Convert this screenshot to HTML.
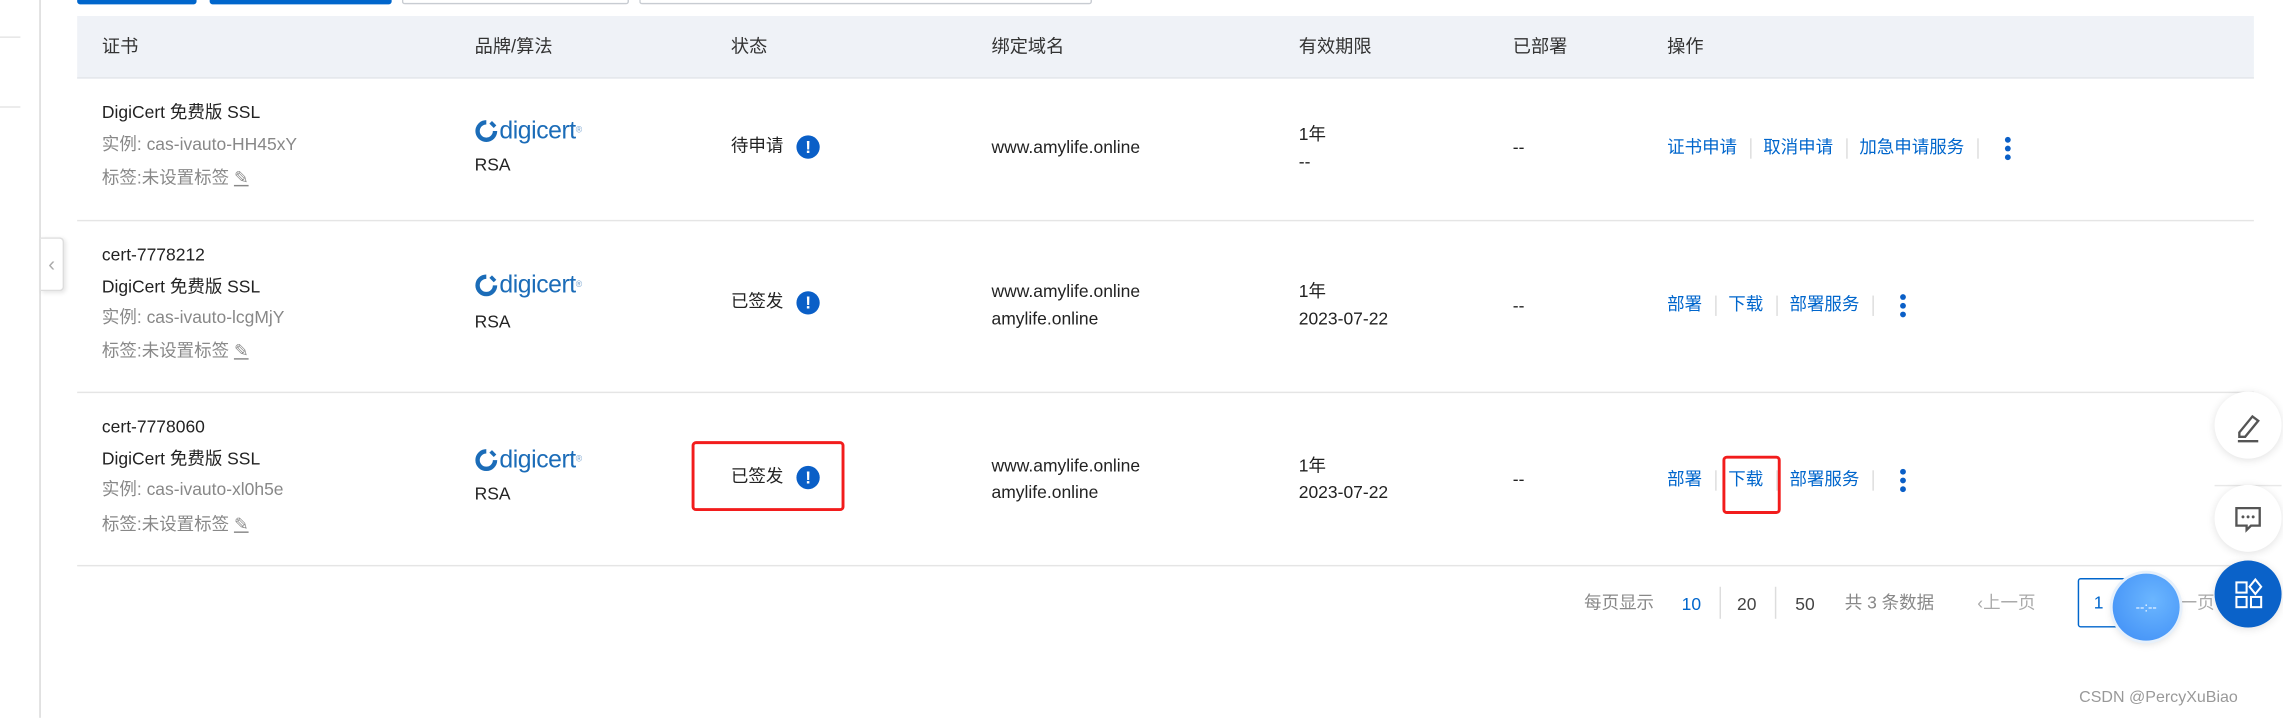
<!DOCTYPE html>
<html><head><meta charset="utf-8">
<style>
html,body{margin:0;padding:0;background:#fff;}
body{width:2283px;height:718px;overflow:hidden;position:relative;}
#s{position:absolute;left:0;top:0;width:1568px;height:493px;transform:scale(1.456);transform-origin:0 0;font-family:"Liberation Sans","Noto Sans CJK SC",sans-serif;font-size:12px;color:#222;}
.a{position:absolute;white-space:nowrap;line-height:14px;}
.g{color:#888;}
.b{color:#0066cc;}
.hd{font-size:12.5px;color:#333;}
.line{position:absolute;left:53px;width:1495px;height:1px;background:#e5e5e5;}
.ic{display:inline-block;width:16px;height:16px;border-radius:50%;background:#0a5fc7;color:#fff;font-weight:bold;font-size:12px;line-height:16px;text-align:center;vertical-align:middle;margin-left:9px;}
.sep{display:inline-block;width:1px;height:14px;background:#ddd;vertical-align:middle;margin:0 8.5px;}
.dots{display:inline-block;vertical-align:middle;margin-left:10px;width:4px;}
.dots i{display:block;width:4px;height:4px;border-radius:50%;background:#0a5fc7;margin:2px 0;}
.logo{position:absolute;color:#1b6cb8;font-size:17px;letter-spacing:-0.3px;white-space:nowrap;line-height:18px;}
.logo svg{vertical-align:-3px;margin-right:1px;}
.logo sup{font-size:6px;color:#7aa5d0;vertical-align:top;}
.fb{position:absolute;left:1521px;width:46px;height:46px;border-radius:50%;background:#fff;box-shadow:0 1px 6px rgba(0,0,0,.12);}
</style></head><body><div id="s">
<div style="position:absolute;left:27px;top:0;width:1px;height:493px;background:#d8d8d8"></div>
<div style="position:absolute;left:0;top:25px;width:14px;height:1px;background:#e5e5e5"></div>
<div style="position:absolute;left:0;top:73px;width:14px;height:1px;background:#e5e5e5"></div>
<div style="position:absolute;left:28px;top:163px;width:15px;height:35px;border:1px solid #ddd;border-left:none;border-radius:0 3px 3px 0;background:#fff;box-shadow:1px 1px 3px rgba(0,0,0,.1);color:#aaa;font-size:14px;line-height:35px;text-align:center">&lsaquo;</div>
<div style="position:absolute;left:53px;top:0;width:82px;height:3px;background:#0066cc;border-radius:0 0 2px 2px"></div>
<div style="position:absolute;left:144px;top:0;width:125px;height:3px;background:#0066cc;border-radius:0 0 2px 2px"></div>
<div style="position:absolute;left:276px;top:-2px;width:154px;height:4px;border:1px solid #c8ccd2;border-top:none;border-radius:0 0 2px 2px"></div>
<div style="position:absolute;left:439px;top:-2px;width:309px;height:4px;border:1px solid #c8ccd2;border-top:none;border-radius:0 0 2px 2px"></div>
<div style="position:absolute;left:53px;top:11px;width:1495px;height:42px;background:#eff2f7;border-bottom:1px solid #e3e6eb"></div>
<div class="a hd" style="left:70px;top:25px">证书</div>
<div class="a hd" style="left:326px;top:25px">品牌/算法</div>
<div class="a hd" style="left:502px;top:25px">状态</div>
<div class="a hd" style="left:681px;top:25px">绑定域名</div>
<div class="a hd" style="left:892px;top:25px">有效期限</div>
<div class="a hd" style="left:1039px;top:25px">已部署</div>
<div class="a hd" style="left:1145px;top:25px">操作</div>
<div class="line" style="top:151px"></div>
<div class="line" style="top:269px"></div>
<div class="line" style="top:388px"></div>

<div class="a" style="left:70px;top:70px">DigiCert 免费版 SSL</div>
<div class="a g" style="left:70px;top:92px">实例: cas-ivauto-HH45xY</div>
<div class="a g" style="left:70px;top:115px">标签:未设置标签 <u>&#x270E;</u></div>
<div class="logo" style="left:326px;top:81px"><svg width="16" height="16" viewBox="0 0 16 16"><path d="M8 2 A6 6 0 1 0 14 8" fill="none" stroke="#1b6cb8" stroke-width="3"/><path d="M11 2 L14 5" stroke="#1b6cb8" stroke-width="2.5"/></svg>digicert<sup>®</sup></div>
<div class="a" style="left:326px;top:106px">RSA</div>
<div class="a" style="left:502px;top:92px;line-height:16px">待申请<span class="ic">!</span></div>
<div class="a" style="left:681px;top:94px">www.amylife.online</div>
<div class="a" style="left:892px;top:85px">1年</div>
<div class="a" style="left:892px;top:104px">--</div>
<div class="a" style="left:1039px;top:94px">--</div>
<div class="a b" style="left:1145px;top:90px;line-height:22px">证书申请<span class="sep"></span>取消申请<span class="sep"></span>加急申请服务<span class="sep"></span><span class="dots"><i></i><i></i><i></i></span></div>

<div class="a" style="left:70px;top:168px">cert-7778212</div>
<div class="a" style="left:70px;top:190px">DigiCert 免费版 SSL</div>
<div class="a g" style="left:70px;top:211px">实例: cas-ivauto-lcgMjY</div>
<div class="a g" style="left:70px;top:234px">标签:未设置标签 <u>&#x270E;</u></div>
<div class="logo" style="left:326px;top:187px"><svg width="16" height="16" viewBox="0 0 16 16"><path d="M8 2 A6 6 0 1 0 14 8" fill="none" stroke="#1b6cb8" stroke-width="3"/><path d="M11 2 L14 5" stroke="#1b6cb8" stroke-width="2.5"/></svg>digicert<sup>®</sup></div>
<div class="a" style="left:326px;top:214px">RSA</div>
<div class="a" style="left:502px;top:199px;line-height:16px">已签发<span class="ic">!</span></div>
<div class="a" style="left:681px;top:193px">www.amylife.online</div>
<div class="a" style="left:681px;top:212px">amylife.online</div>
<div class="a" style="left:892px;top:193px">1年</div>
<div class="a" style="left:892px;top:212px">2023-07-22</div>
<div class="a" style="left:1039px;top:203px">--</div>
<div class="a b" style="left:1145px;top:198px;line-height:22px">部署<span class="sep"></span>下载<span class="sep"></span>部署服务<span class="sep"></span><span class="dots"><i></i><i></i><i></i></span></div>

<div class="a" style="left:70px;top:286px">cert-7778060</div>
<div class="a" style="left:70px;top:308px">DigiCert 免费版 SSL</div>
<div class="a g" style="left:70px;top:329px">实例: cas-ivauto-xl0h5e</div>
<div class="a g" style="left:70px;top:353px">标签:未设置标签 <u>&#x270E;</u></div>
<div class="logo" style="left:326px;top:307px"><svg width="16" height="16" viewBox="0 0 16 16"><path d="M8 2 A6 6 0 1 0 14 8" fill="none" stroke="#1b6cb8" stroke-width="3"/><path d="M11 2 L14 5" stroke="#1b6cb8" stroke-width="2.5"/></svg>digicert<sup>®</sup></div>
<div class="a" style="left:326px;top:332px">RSA</div>
<div class="a" style="left:502px;top:319px;line-height:16px">已签发<span class="ic">!</span></div>
<div style="position:absolute;left:475px;top:303px;width:101px;height:44px;border:2px solid #f21c1c;border-radius:3px"></div>
<div class="a" style="left:681px;top:313px">www.amylife.online</div>
<div class="a" style="left:681px;top:331px">amylife.online</div>
<div class="a" style="left:892px;top:313px">1年</div>
<div class="a" style="left:892px;top:331px">2023-07-22</div>
<div class="a" style="left:1039px;top:322px">--</div>
<div class="a b" style="left:1145px;top:318px;line-height:22px">部署<span class="sep"></span>下载<span class="sep"></span>部署服务<span class="sep"></span><span class="dots"><i></i><i></i><i></i></span></div>
<div style="position:absolute;left:1183px;top:313px;width:36px;height:36px;border:2px solid #f21c1c;border-radius:3px"></div>

<div class="a g" style="left:1088px;top:407px">每页显示</div>
<div class="a b" style="left:1155px;top:408px">10</div>
<div style="position:absolute;left:1181px;top:403px;width:1px;height:22px;background:#ddd"></div>
<div class="a" style="left:1193px;top:408px;color:#444">20</div>
<div style="position:absolute;left:1219px;top:403px;width:1px;height:22px;background:#ddd"></div>
<div class="a" style="left:1233px;top:408px;color:#444">50</div>
<div class="a g" style="left:1267px;top:407px">共 3 条数据</div>
<div class="a" style="left:1358px;top:407px;color:#aaa">&#x2039;上一页</div>
<div style="position:absolute;left:1427px;top:397px;width:40px;height:32px;border:1px solid #0066cc;border-radius:2px"></div>
<div class="a" style="left:1438px;top:407px;color:#0066cc">1</div>
<div class="a" style="left:1497px;top:407px;color:#aaa">一页</div>
<div style="position:absolute;left:1451px;top:394px;width:46px;height:46px;border-radius:50%;background:radial-gradient(circle at 60% 40%,#6bb6ff,#3d8cf5);box-shadow:0 0 0 2px #e6f0fb,0 2px 6px rgba(0,0,0,.15);color:#fff;font-size:9px;line-height:46px;text-align:center">--:--</div>

<div class="fb" style="top:269px"><svg width="46" height="46" viewBox="0 0 46 46"><path d="M17 28 L26 17 L30 20 L21 31 L17 31 Z" fill="none" stroke="#555" stroke-width="1.6"/><path d="M16 34 H30" stroke="#555" stroke-width="1.6"/></svg></div>
<div style="position:absolute;left:1521px;top:333px;width:46px;height:1px;background:#e8e8e8"></div>
<div class="fb" style="top:333px"><svg width="46" height="46" viewBox="0 0 46 46"><path d="M15 16 H31 V28 H25 L22 31 V28 H15 Z" fill="none" stroke="#555" stroke-width="1.6"/><circle cx="19.5" cy="22" r="1" fill="#555"/><circle cx="23" cy="22" r="1" fill="#555"/><circle cx="26.5" cy="22" r="1" fill="#555"/></svg></div>
<div class="fb" style="top:385px;background:#0a62c9"><svg width="46" height="46" viewBox="0 0 46 46" fill="none" stroke="#fff" stroke-width="1.4"><rect x="15" y="15" width="7" height="7"/><path d="M28 13 L32 18 L28 23 L24 18 Z"/><rect x="15" y="25" width="7" height="7"/><rect x="25" y="25" width="7" height="7"/></svg></div>

<div class="a" style="left:1428px;top:472px;font-size:11px;color:#999">CSDN @PercyXuBiao</div>
</div></body></html>
